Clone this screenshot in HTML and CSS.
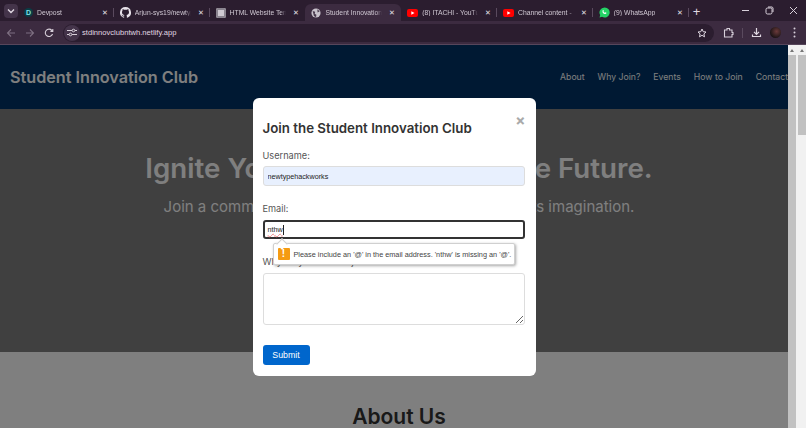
FILE: index.html
```html
<!DOCTYPE html>
<html lang="en">
<head>
  <meta charset="UTF-8">
  <meta name="viewport" content="width=device-width, initial-scale=1">
  <title>Student Innovation Club</title>
  <link rel="stylesheet" href="styles.css">
</head>
<body>
  <!-- Browser tab strip -->
  <div class="tabstrip">
    <button class="tab-search"><svg width="8" height="8" viewBox="0 0 8 8"><path d="M1 2.5 4 5.5 7 2.5" fill="none" stroke="#e0d8e2" stroke-width="1.4"/></svg></button>
    <div class="tab sep">
      <span class="fav fav-d">D</span><span class="tab-title">Devpost</span><span class="tab-x">&#x2715;</span>
    </div>
    <div class="tab sep">
      <svg class="fav" width="11" height="11" viewBox="0 0 16 16"><path fill="#e8e2ea" d="M8 0a8 8 0 0 0-2.5 15.6c.4.1.5-.2.5-.4v-1.4c-2.2.5-2.7-1-2.7-1-.4-.9-.9-1.2-.9-1.2-.7-.5.1-.5.1-.5.8.1 1.2.8 1.2.8.7 1.2 1.9.9 2.3.7.1-.5.3-.9.5-1.1-1.8-.2-3.6-.9-3.6-4 0-.9.3-1.6.8-2.1-.1-.2-.4-1 .1-2.1 0 0 .7-.2 2.2.8a7.6 7.6 0 0 1 4 0c1.5-1 2.2-.8 2.2-.8.5 1.1.2 1.9.1 2.1.5.5.8 1.2.8 2.1 0 3.1-1.9 3.8-3.7 4 .3.3.6.8.6 1.5v2.2c0 .2.1.5.5.4A8 8 0 0 0 8 0z"/></svg><span class="tab-title">Arjun-sys19/newtypehack</span><span class="tab-x">&#x2715;</span>
    </div>
    <div class="tab">
      <span class="fav fav-html"></span><span class="tab-title">HTML Website Templates</span><span class="tab-x">&#x2715;</span>
    </div>
    <div class="tab active">
      <svg class="fav" width="10" height="10" viewBox="0 0 12 12"><circle cx="6" cy="6" r="5.5" fill="#c9c2cc"/><path d="M2 3.5 5 4.5 4.5 7 6.5 8 6 11 3.5 9.5zM7.5 1.5 10.5 4 8 5.5z" fill="#4a3a4e"/></svg><span class="tab-title">Student Innovation Club</span><span class="tab-x">&#x2715;</span>
    </div>
    <div class="tab sep">
      <svg class="fav" width="11" height="8" viewBox="0 0 11 8"><rect width="11" height="8" rx="2" fill="#f00"/><path d="M4.3 2.2 7.5 4 4.3 5.8z" fill="#fff"/></svg><span class="tab-title">(8) ITACHI - YouTube</span><span class="tab-x">&#x2715;</span>
    </div>
    <div class="tab sep">
      <svg class="fav" width="11" height="8" viewBox="0 0 11 8"><rect width="11" height="8" rx="2" fill="#f00"/><path d="M4.3 2.2 7.5 4 4.3 5.8z" fill="#fff"/></svg><span class="tab-title">Channel content - YouTube</span><span class="tab-x">&#x2715;</span>
    </div>
    <div class="tab sep">
      <svg class="fav" width="11" height="11" viewBox="0 0 12 12"><path d="M6 .5a5.5 5.5 0 0 0-4.7 8.3L.6 11.4l2.7-.7A5.5 5.5 0 1 0 6 .5z" fill="#25d366"/><path d="M4.2 3.3c.5-.4.8 0 1 .7.1.4-.4.6-.3.9.3.6.8 1 1.4 1.3.3.1.5-.4.8-.4.6.2 1.1.5 1 .9-.2.8-1.1 1-1.8.8C4.9 7.9 3 5.5 4.2 3.3z" fill="#fff"/></svg><span class="tab-title">(9) WhatsApp</span><span class="tab-x">&#x2715;</span>
    </div>
    <span class="tab-new">+</span>
    <div class="win-btns">
      <svg width="9" height="9" viewBox="0 0 9 9"><path d="M1 4.5H8" stroke="#d8d0da" stroke-width="1"/></svg>
      <svg width="9" height="9" viewBox="0 0 9 9"><rect x="1" y="2" width="6" height="6" rx="1.5" fill="none" stroke="#d8d0da"/><path d="M3 1H7A1.5 1.5 0 0 1 8 2V6" fill="none" stroke="#d8d0da"/></svg>
      <svg width="9" height="9" viewBox="0 0 9 9"><path d="M1 1 8 8M8 1 1 8" stroke="#d8d0da" stroke-width="1"/></svg>
    </div>
  </div>

  <!-- Browser toolbar -->
  <div class="toolbar">
    <div class="nav-btns">
      <svg width="10" height="10" viewBox="0 0 10 10"><path d="M9 5H1.5M5 1.5 1.5 5 5 8.5" fill="none" stroke="#7d6f81" stroke-width="1.1"/></svg>
      <svg width="10" height="10" viewBox="0 0 10 10"><path d="M1 5H8.5M5 1.5 8.5 5 5 8.5" fill="none" stroke="#7d6f81" stroke-width="1.1"/></svg>
      <svg width="10" height="10" viewBox="0 0 10 10"><path d="M8.5 6A3.7 3.7 0 1 1 7.8 2.4L8.8 3.4M8.8 1V3.4H6.4" fill="none" stroke="#d8d0da" stroke-width="1.1"/></svg>
    </div>
    <div class="omnibox">
      <span class="site-info"><svg width="10" height="9" viewBox="0 0 10 9"><path d="M0 2.5H5M8 2.5H10M0 6.5H2M5 6.5H10" stroke="#d8d0da"/><circle cx="6.5" cy="2.5" r="1.3" fill="none" stroke="#d8d0da"/><circle cx="3.5" cy="6.5" r="1.3" fill="none" stroke="#d8d0da"/></svg></span>
      <span class="url">stdinnovclubntwh.netlify.app</span>
      <svg class="star" width="10" height="10" viewBox="0 0 10 10"><path d="M5 1 6.2 3.7 9 4 6.9 5.9 7.5 8.8 5 7.3 2.5 8.8 3.1 5.9 1 4 3.8 3.7z" fill="none" stroke="#e0d8e2" stroke-width="1"/></svg>
    </div>
    <div class="tool-btns">
      <svg width="11" height="11" viewBox="0 0 11 11"><path d="M1.5 3H4V1.5H6.5V3H9V5.5H10V7.5H9V10H1.5z" fill="none" stroke="#d8d0da" stroke-width="1.1"/></svg>
      <span class="tool-sep"></span>
      <svg width="11" height="11" viewBox="0 0 11 11"><path d="M5.5 1V7M3 4.8 5.5 7.3 8 4.8M1.5 7.5V9.5H9.5V7.5" fill="none" stroke="#e0d8e2" stroke-width="1.2"/></svg>
      <span class="avatar"></span>
      <svg width="3" height="11" viewBox="0 0 3 11"><circle cx="1.5" cy="1.5" r="1" fill="#d8d0da"/><circle cx="1.5" cy="5.5" r="1" fill="#d8d0da"/><circle cx="1.5" cy="9.5" r="1" fill="#d8d0da"/></svg>
    </div>
  </div>

  <!-- The site -->
  <div class="window">
    <div class="page">
      <header class="site-header">
        <div class="logo">Student Innovation Club</div>
        <nav class="site-nav">
          <a>About</a>
          <a>Why Join?</a>
          <a>Events</a>
          <a>How to Join</a>
          <a>Contact</a>
        </nav>
      </header>
      <section class="hero">
        <h1>Ignite Your Passion. Shape the Future.</h1>
        <p>Join a community of creators where innovation meets imagination.</p>
      </section>
      <section class="about">
        <h2>About Us</h2>
      </section>

      <!-- Modal over the page -->
      <div class="overlay">
        <div class="overlay-main">
          <div class="modal">
            <span class="close">&times;</span>
            <h3>Join the Student Innovation Club</h3>
            <label class="field-label">Username:</label>
            <input class="field field-filled" type="text" value="newtypehackworks">
            <label class="field-label">Email:</label>
            <div class="field field-focus"><span class="typo">nthw</span><span class="caret"></span></div>
            <label class="field-label">Why do you want to join?</label>
            <textarea class="field field-area"></textarea>
            <button class="submit">Submit</button>

            <div class="bubble">
              <span class="bubble-arrow"></span>
              <span class="bubble-icon">!</span>
              <span>Please include an '@' in the email address. 'nthw' is missing an '@'.</span>
            </div>
          </div>
        </div>
        <div class="scrollbar scrollbar-dim"><span class="arrow-up"></span><span class="thumb thumb-full"></span></div>
      </div>
    </div>
    <div class="scrollbar"><span class="arrow-up"></span><span class="thumb"></span></div>
  </div>
</body>
</html>
```

FILE: styles.css
```css
html, body {
  margin: 0;
  padding: 0;
  height: 100%;
  overflow: hidden;
  font-family: "Liberation Sans", Arial, sans-serif;
  background-color: #2b1d2f;
}

/* Tab strip */
.tabstrip {
  display: flex;
  align-items: flex-end;
  height: 21px;
  background-color: #2b1d2f;
  color: #cfc7d2;
  font-size: 6.8px;
}
.tab-search {
  width: 14px;
  height: 14px;
  margin: 0 0 3px 4px;
  padding: 0;
  border: none;
  border-radius: 4px;
  background-color: #44344a;
  display: flex;
  align-items: center;
  justify-content: center;
}
.tab {
  position: relative;
  display: flex;
  align-items: center;
  box-sizing: border-box;
  flex: none;
  width: 95.8px;
  height: 17px;
  padding: 0 3px 0 3px;
  gap: 4px;
}
.tab.sep::after {
  content: "";
  position: absolute;
  right: 0;
  top: 4px;
  height: 9px;
  width: 1px;
  background-color: #5a4a5e;
}
.tab.active {
  background-color: #3c2b40;
  border-radius: 6px 6px 0 0;
}
.fav {
  flex: none;
  display: block;
  margin-left: 3px;
}
.fav-d {
  width: 9px;
  height: 9px;
  border-radius: 50%;
  background-color: #0a3d46;
  color: #7fe0e8;
  font-size: 7px;
  font-weight: bold;
  line-height: 9px;
  text-align: center;
}
.fav-html {
  width: 10px;
  height: 10px;
  border-radius: 2px;
  background-color: #cfcad2;
  box-shadow: inset 0 0 0 2px #8b8590;
}
.tab-title {
  flex: 1;
  min-width: 0;
  overflow: hidden;
  white-space: nowrap;
  -webkit-mask-image: linear-gradient(to right, #000 90%, transparent);
  mask-image: linear-gradient(to right, #000 90%, transparent);
}
.tab-x {
  flex: none;
  width: 12px;
  text-align: center;
  font-size: 7px;
  color: #e8e2ea;
}
.tab-new {
  margin: 0 0 1px 3px;
  width: 10px;
  height: 17px;
  font-size: 13px;
  line-height: 17px;
  text-align: center;
  color: #e0d8e2;
}
.win-btns {
  display: flex;
  align-items: center;
  gap: 15px;
  height: 21px;
  margin-left: auto;
  padding-right: 8px;
}

/* Toolbar */
.toolbar {
  display: flex;
  align-items: center;
  box-sizing: border-box;
  height: 24px;
  background-color: #3c2b40;
  border-bottom: 1px solid #57465b;
}
.nav-btns {
  display: flex;
  align-items: center;
  gap: 9px;
  padding-left: 6px;
  width: 63px;
  box-sizing: border-box;
}
.omnibox {
  display: flex;
  align-items: center;
  flex: none;
  width: 651px;
  height: 18px;
  border-radius: 9px;
  background-color: #2b1d2f;
  color: #e0d8e2;
  font-size: 7.6px;
}
.site-info {
  display: flex;
  align-items: center;
  justify-content: center;
  width: 16px;
  height: 16px;
  margin-left: 1px;
  border-radius: 50%;
  background-color: #44344a;
}
.url {
  margin-left: 2px;
  flex: 1;
}
.star {
  margin-right: 7px;
}
.tool-btns {
  display: flex;
  align-items: center;
  gap: 8px;
  padding-left: 9px;
}
.tool-sep {
  width: 1px;
  height: 10px;
  background-color: #5a4a5e;
}
.avatar {
  width: 11px;
  height: 11px;
  margin-right: 4px;
  border-radius: 50%;
  background: radial-gradient(circle at 60% 40%, #6b3a3a, #1c1416 70%);
}

/* Site */
.window {
  display: flex;
  height: 383px;
}
.page {
  position: relative;
  flex: none;
  width: 798px;
  overflow: hidden;
  background-color: #fff;
  font-family: Inter, "Liberation Sans", sans-serif;
}
.site-header {
  display: flex;
  align-items: center;
  justify-content: space-between;
  box-sizing: border-box;
  height: 64px;
  padding: 0 10px 0 10px;
  background-color: #003366;
  color: #fff;
}
.logo {
  font-size: 16.2px;
  font-weight: 600;
}
.site-nav {
  display: flex;
  gap: 13px;
  font-size: 8.7px;
}
.hero {
  height: 243px;
  box-sizing: border-box;
  padding-top: 43px;
  background-color: #808080;
  color: #fff;
  text-align: center;
}
.hero h1 {
  margin: 0;
  font-size: 27.7px;
  line-height: 32px;
  font-weight: 600;
}
.hero p {
  margin: 14px 0 0;
  font-size: 15px;
  line-height: 18px;
}
.about {
  padding-top: 51px;
  background-color: #fff;
  height: 100px;
  text-align: center;
}
.about h2 {
  margin: 0;
  font-size: 21px;
  line-height: 28px;
  font-weight: 600;
  color: #333;
}

/* Modal */
.overlay {
  position: absolute;
  inset: 0;
  display: flex;
  background-color: rgba(0, 0, 0, 0.5);
}
.overlay-main {
  flex: 1;
  display: flex;
  justify-content: center;
  align-items: flex-start;
  padding-top: 53px;
}
.modal {
  position: relative;
  display: flex;
  flex-direction: column;
  align-items: flex-start;
  box-sizing: border-box;
  width: 283px;
  height: 278px;
  padding: 22px 11px 0 10px;
  border-radius: 6px;
  background-color: #fff;
  color: #333;
}
.modal h3 {
  margin: 0 0 12px;
  font-size: 13.3px;
  line-height: 17px;
  font-weight: 600;
}
.close {
  position: absolute;
  top: 14px;
  right: 10px;
  font-size: 15px;
  line-height: 17px;
  font-weight: bold;
  color: #aaa;
}
.field-label {
  font-size: 9.2px;
  line-height: 13px;
  color: #555;
}
.field {
  display: block;
  box-sizing: border-box;
  width: 262px;
  margin: 5px 0 15px;
  padding: 0 4px;
  border: 1px solid #ddd;
  border-radius: 3px;
  font-family: "Liberation Sans", Arial, sans-serif;
  font-size: 7.2px;
  color: #222;
  outline: none;
}
.field-filled {
  height: 20px;
  margin-top: 4px;
  margin-bottom: 16px;
  background-color: #e8f0fe;
}
.field-focus {
  display: flex;
  align-items: center;
  height: 19px;
  margin-top: 5px;
  margin-bottom: 16px;
  border: 2px solid #333;
  padding-left: 3px;
}
.typo {
  text-decoration: underline wavy #e88;
  text-decoration-thickness: 0.5px;
}
.caret {
  width: 1px;
  height: 10px;
  background-color: #222;
}
.field-area {
  height: 52px;
  margin-bottom: 20px;
  resize: vertical;
}
.submit {
  width: 47px;
  height: 20px;
  padding: 0;
  border: none;
  border-radius: 3px;
  background-color: #0066cc;
  color: #fff;
  font-family: "Liberation Sans", Arial, sans-serif;
  font-size: 8.8px;
}

/* Validation bubble */
.bubble {
  position: absolute;
  left: 20px;
  top: 145px;
  display: flex;
  align-items: center;
  gap: 4px;
  box-sizing: border-box;
  width: 242px;
  height: 22px;
  padding-left: 4px;
  border: 1px solid #d0d0d0;
  border-radius: 2px;
  background-color: #fff;
  box-shadow: 1px 1px 3px rgba(0, 0, 0, 0.35);
  font-family: "Liberation Sans", Arial, sans-serif;
  font-size: 7.3px;
  white-space: nowrap;
  color: #444;
}
.bubble-arrow {
  position: absolute;
  left: 4px;
  top: -4px;
  width: 7px;
  height: 7px;
  background-color: #fff;
  border-left: 1px solid #d0d0d0;
  border-top: 1px solid #d0d0d0;
  transform: rotate(45deg);
}
.bubble-icon {
  flex: none;
  width: 12px;
  height: 12px;
  border-radius: 1px;
  background-color: #f59b12;
  color: #fff;
  font-size: 10px;
  font-weight: bold;
  line-height: 12px;
  text-align: center;
}

/* Scrollbars */
.scrollbar {
  position: relative;
  flex: none;
  width: 8px;
  background-color: #f1f1f1;
}
.scrollbar-dim {
  width: 10px;
}
.arrow-up {
  position: absolute;
  top: 4px;
  left: 2px;
  border-left: 2px solid transparent;
  border-right: 2px solid transparent;
  border-bottom: 3px solid #777;
}
.thumb {
  position: absolute;
  top: 10px;
  left: 0;
  width: 8px;
  height: 80px;
  background-color: #c1c1c1;
}
.thumb-full {
  height: auto;
  bottom: 0;
}
```
